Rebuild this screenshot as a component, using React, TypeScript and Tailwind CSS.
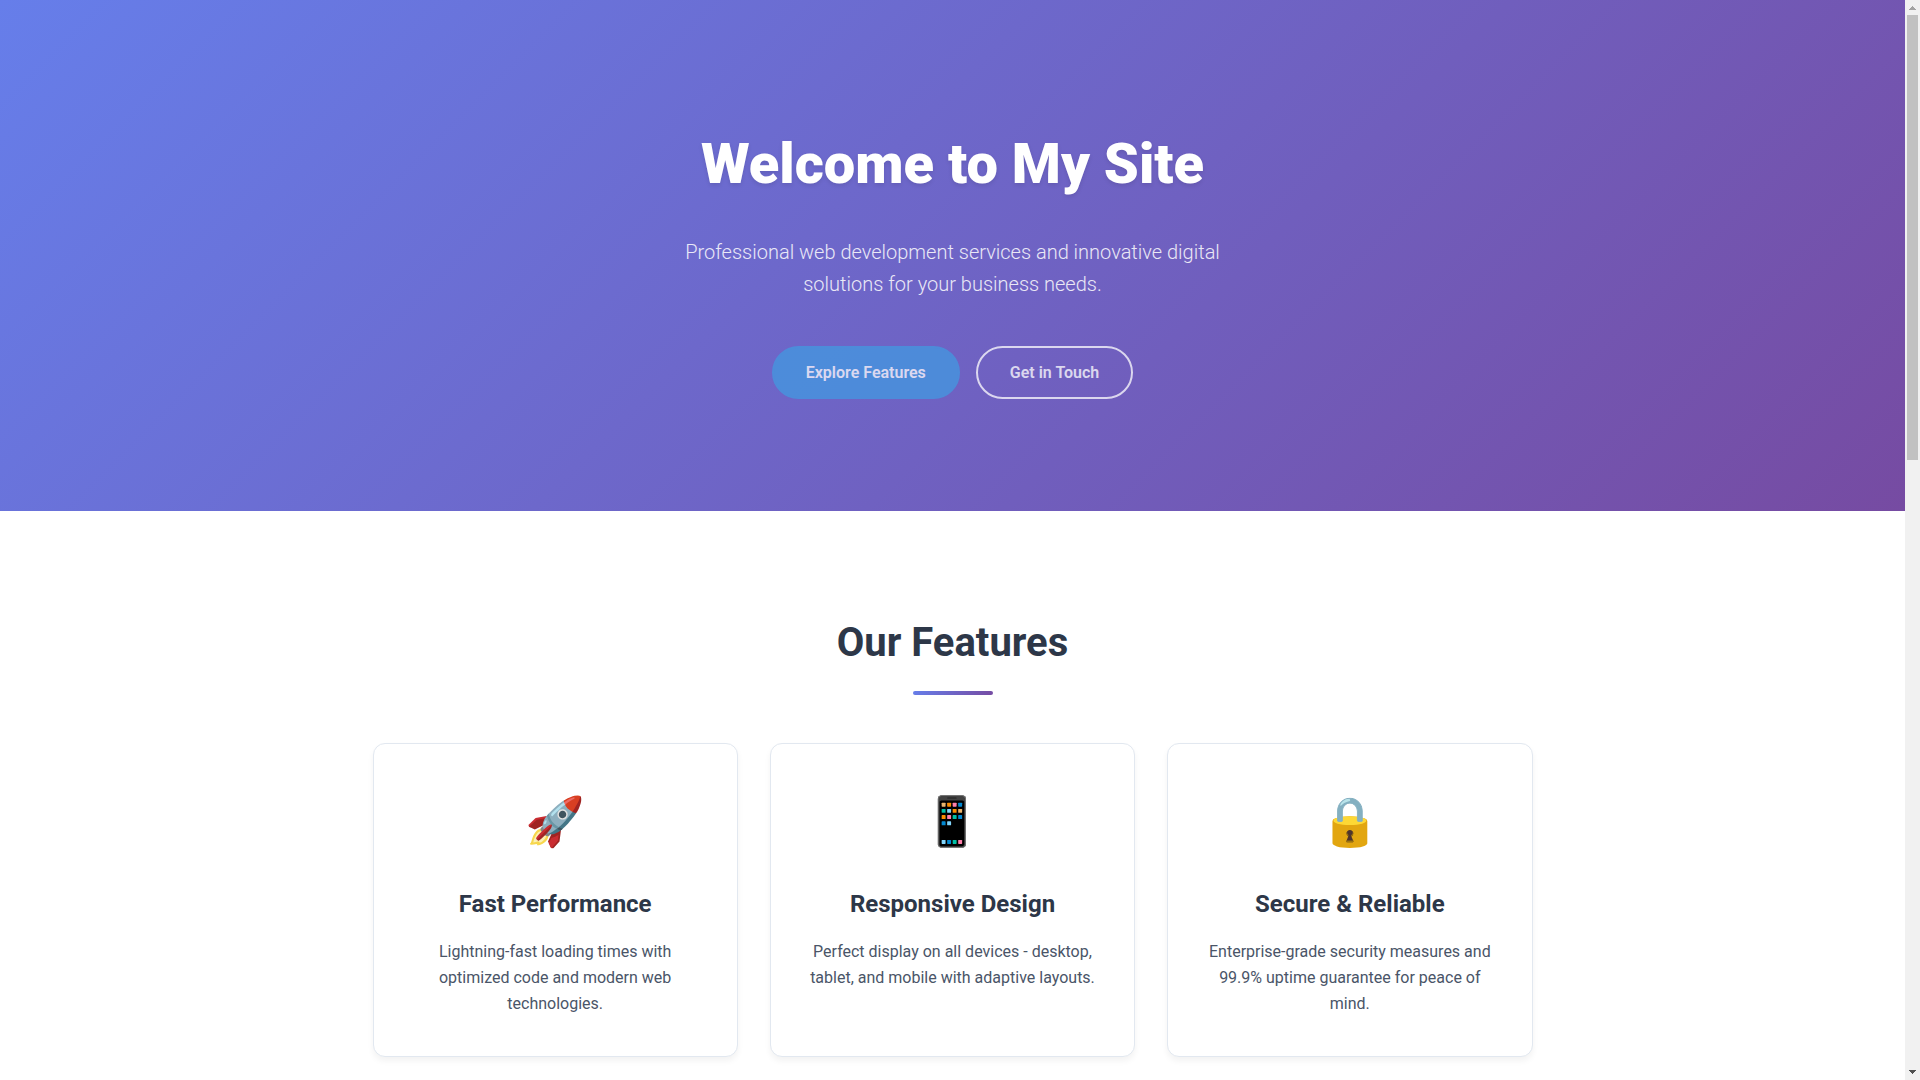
const features = [
  {
    icon: '🚀',
    title: 'Fast Performance',
    text: 'Lightning-fast loading times with optimized code and modern web technologies.',
  },
  {
    icon: '📱',
    title: 'Responsive Design',
    text: 'Perfect display on all devices - desktop, tablet, and mobile with adaptive layouts.',
  },
  {
    icon: '🔒',
    title: 'Secure & Reliable',
    text: 'Enterprise-grade security measures and 99.9% uptime guarantee for peace of mind.',
  },
]

function Hero() {
  return (
    <header className="bg-[linear-gradient(135deg,#667eea_0%,#764ba2_100%)] px-5 pt-[120px] pb-28 text-center text-white">
      <h1 className="mb-7 text-[56px] leading-[88px] font-black [text-shadow:0_2px_4px_rgba(0,0,0,0.1)]">
        Welcome to My Site
      </h1>
      <p className="mx-auto mb-[46px] max-w-[600px] text-xl leading-8 font-light opacity-85">
        Professional web development services and innovative digital solutions for your business needs.
      </p>
      <div className="flex flex-wrap justify-center gap-4 leading-[25px] opacity-75">
        <a href="#features" className="rounded-full border-2 border-[#4299e1] bg-[#4299e1] px-8 py-3 font-semibold">
          Explore Features
        </a>
        <a href="#contact" className="rounded-full border-2 border-white px-8 py-3 font-semibold">
          Get in Touch
        </a>
      </div>
    </header>
  )
}

function FeatureCard({ icon, title, text }: (typeof features)[number]) {
  return (
    <article className="rounded-xl border border-[#e2e8f0] bg-white px-8 pt-10 pb-[39px] text-center shadow-[0_4px_6px_rgba(0,0,0,0.05)]">
      <div className="mb-[26px] text-5xl leading-[75px]">{icon}</div>
      <h3 className="mb-4 text-2xl leading-[38px] font-bold text-[#2d3748]">{title}</h3>
      <p className="leading-[26px] text-[#4a5568]">{text}</p>
    </article>
  )
}

/** Always-visible scrollbar down the right edge of the window. */
function ScrollTrack() {
  return (
    <div aria-hidden="true" className="flex w-[15px] shrink-0 flex-col bg-[#f1f1f1]">
      <svg viewBox="0 0 15 15" className="h-[15px] w-[15px]" shapeRendering="crispEdges">
        <path d="M7 6h1v1h1v1h1v1h1v1H4V9h1V8h1V7h1z" fill="#a3a3a3" />
      </svg>
      <div className="flex-1 px-0.5">
        <div className="h-[42.4%] bg-[#c1c1c1]" />
      </div>
      <svg viewBox="0 0 15 15" className="h-[15px] w-[15px]" shapeRendering="crispEdges">
        <path d="M4 5h7v1h-1v1H9v1H8v1H7V8H6V7H5V6H4z" fill="#505050" />
      </svg>
    </div>
  )
}

export default function App() {
  return (
    <div className="flex h-screen bg-white font-[Roboto,sans-serif]">
      <main className="min-w-0 flex-1 overflow-y-auto">
        <Hero />
        <section id="features" className="px-5 py-[100px]">
          <h2 className="text-center text-[40px] leading-[64px] font-bold text-[#2d3748]">Our Features</h2>
          <div className="mx-auto mt-4 mb-12 h-1 w-20 rounded-sm bg-[linear-gradient(135deg,#667eea_0%,#764ba2_100%)]" />
          <div className="mx-auto grid max-w-[1160px] grid-cols-3 gap-8">
            {features.map((feature) => (
              <FeatureCard key={feature.title} {...feature} />
            ))}
          </div>
        </section>
      </main>
      <ScrollTrack />
    </div>
  )
}
